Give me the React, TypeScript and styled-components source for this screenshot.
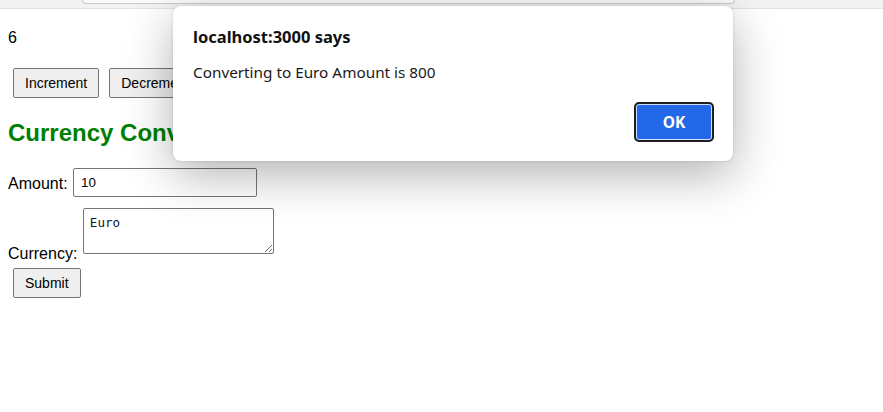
import React from "react";
import styled, { createGlobalStyle } from "styled-components";

const Global = createGlobalStyle`
  html, body { margin: 0; padding: 0; background: #fff; }
  body { font-family: "Liberation Sans", Arial, sans-serif; font-size: 16px; color: #000; }
`;

const Shell = styled.div`
  position: relative;
  width: 883px;
  height: 412px;
  overflow: hidden;
  background: #fff;
`;

const TopStrip = styled.div`
  height: 8px;
  background: #f3f3f3;
  border-bottom: 1px solid #e3e3e3;
  display: flex;
  padding-left: 82px;
`;

const UrlBar = styled.div`
  width: 651px;
  height: 3px;
  background: #fbfbfb;
  border: 1px solid #c9c9c9;
  border-top: none;
  border-radius: 0 0 12px 12px;
`;

const Page = styled.div`
  padding: 0 8px;
`;

const Count = styled.p`
  margin: 20px 0 0;
  line-height: 18px;
`;

const ButtonRow = styled.div`
  display: flex;
  margin-top: 16px;
`;

const Btn = styled.button`
  font-family: "Liberation Sans", Arial, sans-serif;
  font-size: 14px;
  line-height: 16px;
  padding: 6px 11px;
  margin: 5px;
  background: #efefef;
  color: #000;
  border: 1px solid #767676;
  border-radius: 2px;
`;

const Heading = styled.h2`
  margin: 16px 0 0;
  font-size: 24px;
  line-height: 28px;
  font-weight: bold;
  color: #008000;
`;

const Form = styled.form`
  margin-top: 21px;
`;

const Row = styled.div<{ $align: string; $mt?: number }>`
  display: flex;
  align-items: ${(p) => p.$align};
  margin-top: ${(p) => p.$mt ?? 0}px;
`;

const Label = styled.label<{ $shift?: number }>`
  line-height: 18px;
  margin-right: 5.5px;
  padding-top: ${(p) => p.$shift ?? 0}px;
`;

const Input = styled.input`
  box-sizing: border-box;
  width: 184px;
  height: 29px;
  padding: 6px 7px;
  font-family: "Liberation Sans", Arial, sans-serif;
  font-size: 13.33px;
  border: 1px solid #767676;
  border-radius: 2px;
  margin: 0;
`;

const TextArea = styled.textarea`
  box-sizing: border-box;
  width: 191px;
  height: 46px;
  padding: 6px;
  margin: 0 0 9px;
  font-family: "DejaVu Sans Mono", "Liberation Mono", monospace;
  font-size: 12.5px;
  line-height: 15px;
  border: 1px solid #767676;
  border-radius: 2px;
  color: #0a1a33;
`;

const Dialog = styled.div`
  position: absolute;
  left: 173px;
  top: 6px;
  width: 560px;
  height: 155px;
  box-sizing: border-box;
  background: #fff;
  border-radius: 8px;
  box-shadow: 0 14px 48px rgba(0, 0, 0, 0.3), 0 0 3px rgba(0, 0, 0, 0.14);
  padding: 20px 19px 19px 20px;
  display: flex;
  flex-direction: column;
  font-family: "Noto Sans", "Open Sans", sans-serif;
  color: #1a1a1a;
`;

const DialogTitle = styled.div`
  font-weight: bold;
  font-size: 16.5px;
  line-height: 22px;
  color: #111;
`;

const DialogMessage = styled.div`
  margin-top: 14px;
  font-size: 15.3px;
  line-height: 21px;
`;

const DialogActions = styled.div`
  margin-top: auto;
  display: flex;
  justify-content: flex-end;
`;

const OkButton = styled.button`
  width: 80px;
  height: 40px;
  box-sizing: border-box;
  border: 2px solid #1e1f22;
  border-radius: 5px;
  background: #2268e8;
  box-shadow: inset 0 0 0 1px #cfe0ff;
  color: #fff;
  font-family: "Noto Sans", "Open Sans", sans-serif;
  font-weight: bold;
  font-size: 15.5px;
  padding: 0;
`;

export default function App() {
  return (
    <Shell>
      <Global />
      <TopStrip>
        <UrlBar />
      </TopStrip>
      <Page>
        <Count>6</Count>
        <ButtonRow>
          <Btn>Increment</Btn>
          <Btn>Decrement</Btn>
        </ButtonRow>
        <Heading>Currency Convertor</Heading>
        <Form onSubmit={(e) => e.preventDefault()}>
          <Row $align="center">
            <Label $shift={2}>Amount:</Label>
            <Input defaultValue="10" />
          </Row>
          <Row $align="flex-end" $mt={11}>
            <Label>Currency:</Label>
            <TextArea defaultValue="Euro" />
          </Row>
          <Btn type="submit">Submit</Btn>
        </Form>
      </Page>
      <Dialog>
        <DialogTitle>localhost:3000 says</DialogTitle>
        <DialogMessage>Converting to Euro Amount is 800</DialogMessage>
        <DialogActions>
          <OkButton>OK</OkButton>
        </DialogActions>
      </Dialog>
    </Shell>
  );
}
